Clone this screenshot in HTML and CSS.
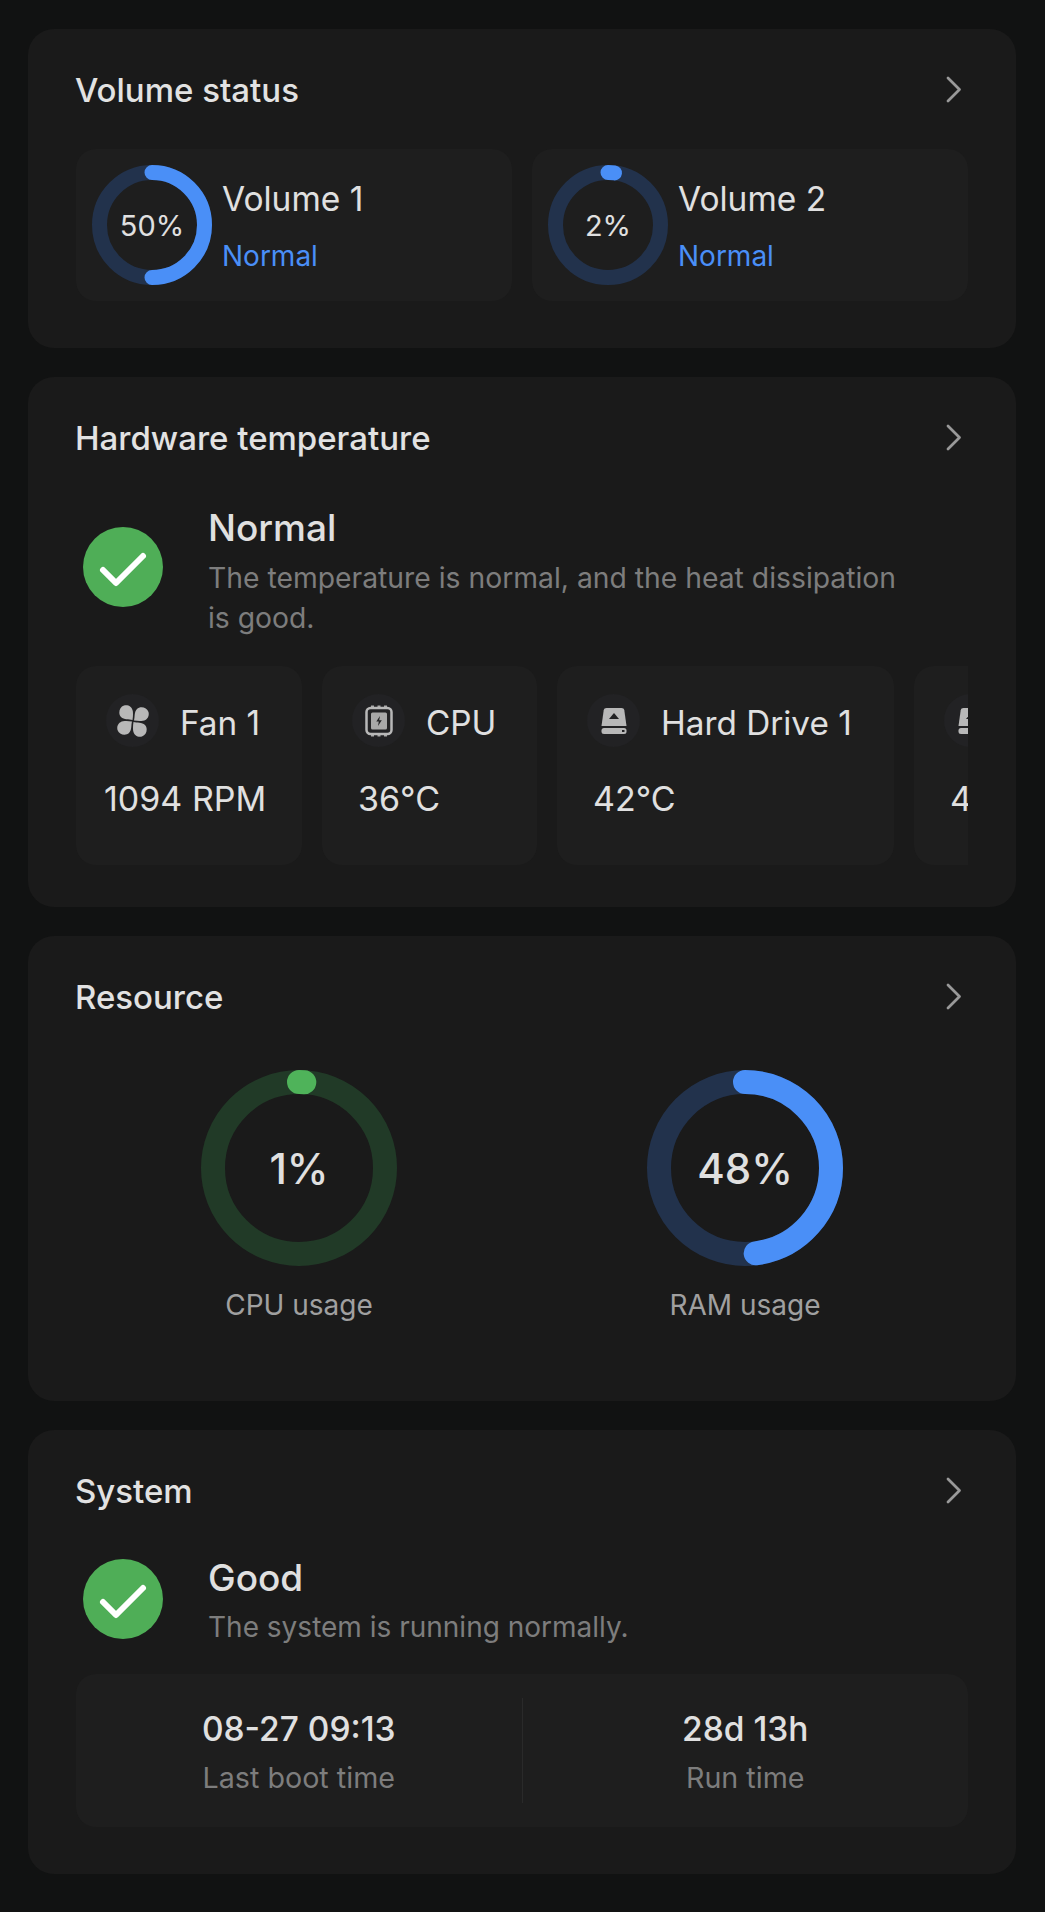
FILE: index.html
```html
<!DOCTYPE html>
<html lang="en">
<head>
<meta charset="utf-8">
<title>Dashboard</title>
<link rel="stylesheet" href="styles.css">
</head>
<body>
<svg class="defs" width="0" height="0" aria-hidden="true">
  <defs>
    <symbol id="chev" viewBox="0 0 16 27"><path d="M2 2 L13.500 13.500 L2 25" fill="none" stroke="currentColor" stroke-width="2.800" stroke-linecap="round" stroke-linejoin="round"/></symbol>
    <symbol id="check" viewBox="0 0 80 80"><circle cx="40" cy="40" r="40" fill="#4fae57"/><path d="M20 43 L33 56 L60 29" fill="none" stroke="#fff" stroke-width="6" stroke-linecap="round" stroke-linejoin="round"/></symbol>
    <symbol id="drive" viewBox="0 0 28 28"><path d="M6.500 1 H21.500 C23 1 24 1.800 24.300 3.300 L26.500 19 H1.500 L3.700 3.300 C4 1.800 5 1 6.500 1Z" fill="#b8b8b8"/><path d="M14 6 L19 12 H9Z" fill="#222224"/><rect x="1.500" y="21" width="25" height="6" rx="2.500" fill="#b8b8b8"/><rect x="22" y="23" width="2.500" height="2" fill="#222224"/></symbol>
  </defs>
</svg>
<main class="page">

  <section class="card card-volume">
    <header class="card-head"><h2 class="card-title">Volume status</h2><svg class="chev"><use href="#chev"/></svg></header>
    <div class="volumes">
      <div class="volume tile">
        <div class="ring ring-small">
          <svg viewBox="0 0 120 120"><circle class="track-blue" cx="60" cy="60" r="52.500"/><circle class="arc-blue" cx="60" cy="60" r="52.500" pathLength="100" stroke-dasharray="50 100" transform="rotate(-90 60 60)"/></svg>
          <span class="ring-value">50%</span>
        </div>
        <div class="volume-text"><div class="volume-name">Volume 1</div><div class="volume-state">Normal</div></div>
      </div>
      <div class="volume tile">
        <div class="ring ring-small">
          <svg viewBox="0 0 120 120"><circle class="track-blue" cx="60" cy="60" r="52.500"/><circle class="arc-blue" cx="60" cy="60" r="52.500" pathLength="100" stroke-dasharray="2 100" transform="rotate(-90 60 60)"/></svg>
          <span class="ring-value">2%</span>
        </div>
        <div class="volume-text"><div class="volume-name">Volume 2</div><div class="volume-state">Normal</div></div>
      </div>
    </div>
  </section>

  <section class="card card-hardware">
    <header class="card-head"><h2 class="card-title">Hardware temperature</h2><svg class="chev"><use href="#chev"/></svg></header>
    <div class="status status-temp">
      <svg class="status-icon"><use href="#check"/></svg>
      <div class="status-text">
        <div class="status-title">Normal</div>
        <p class="status-desc">The temperature is normal, and the heat dissipation is good.</p>
      </div>
    </div>
    <div class="sensors">
      <div class="sensor tile sensor-fan">
        <div class="sensor-head">
          <span class="sensor-icon"><svg class="glyph-fan" viewBox="0 0 32 32"><g fill="#b8b8b8"><path id="blade" d="M15.500 15 C12 14 7 15 4 12 C1 9 2 2 7 0.500 C11 -0.500 15 1.500 15.800 6 C16.200 9 16 12 15.500 15Z"/><use href="#blade" transform="rotate(90 16 16)"/><use href="#blade" transform="rotate(180 16 16)"/><use href="#blade" transform="rotate(270 16 16)"/></g></svg></span>
          <span class="sensor-label">Fan 1</span>
        </div>
        <div class="sensor-value">1094 RPM</div>
      </div>
      <div class="sensor tile sensor-cpu">
        <div class="sensor-head">
          <span class="sensor-icon"><svg class="glyph-chip" viewBox="0 0 28 32"><g fill="#a8a8a8"><rect x="6" y="0.500" width="3" height="2"/><rect x="12.500" y="0.500" width="3" height="2"/><rect x="19" y="0.500" width="3" height="2"/><rect x="6" y="29.500" width="3" height="2"/><rect x="12.500" y="29.500" width="3" height="2"/><rect x="19" y="29.500" width="3" height="2"/></g><rect x="1.500" y="3" width="25" height="26" rx="4" fill="none" stroke="#b8b8b8" stroke-width="2.500"/><rect x="6" y="7.500" width="16" height="17" rx="1.500" fill="#a8a8a8"/><path d="M15 11 L11.300 16.500 H13.800 L13 21 L16.800 15.200 H14.200Z" fill="#222224"/></svg></span>
          <span class="sensor-label">CPU</span>
        </div>
        <div class="sensor-value">36°C</div>
      </div>
      <div class="sensor tile sensor-disk">
        <div class="sensor-head">
          <span class="sensor-icon"><svg class="glyph-drive"><use href="#drive"/></svg></span>
          <span class="sensor-label">Hard Drive 1</span>
        </div>
        <div class="sensor-value">42°C</div>
      </div>
      <div class="sensor tile sensor-disk">
        <div class="sensor-head">
          <span class="sensor-icon"><svg class="glyph-drive"><use href="#drive"/></svg></span>
          <span class="sensor-label">Hard Drive 2</span>
        </div>
        <div class="sensor-value">42°C</div>
      </div>
    </div>
  </section>

  <section class="card card-resource">
    <header class="card-head"><h2 class="card-title">Resource</h2><svg class="chev"><use href="#chev"/></svg></header>
    <div class="gauges">
      <div class="gauge">
        <div class="ring ring-large">
          <svg viewBox="0 0 196 196"><circle class="track-green" cx="98" cy="98" r="86"/><circle class="arc-green" cx="98" cy="98" r="86" pathLength="100" stroke-dasharray="1 100" transform="rotate(-90 98 98)"/></svg>
          <span class="ring-value">1%</span>
        </div>
        <div class="gauge-label">CPU usage</div>
      </div>
      <div class="gauge">
        <div class="ring ring-large">
          <svg viewBox="0 0 196 196"><circle class="track-blue" cx="98" cy="98" r="86"/><circle class="arc-blue" cx="98" cy="98" r="86" pathLength="100" stroke-dasharray="48 100" transform="rotate(-90 98 98)"/></svg>
          <span class="ring-value">48%</span>
        </div>
        <div class="gauge-label">RAM usage</div>
      </div>
    </div>
  </section>

  <section class="card card-system">
    <header class="card-head"><h2 class="card-title">System</h2><svg class="chev"><use href="#chev"/></svg></header>
    <div class="status status-system">
      <svg class="status-icon"><use href="#check"/></svg>
      <div class="status-text">
        <div class="status-title">Good</div>
        <p class="status-desc">The system is running normally.</p>
      </div>
    </div>
    <div class="uptime tile">
      <div class="uptime-cell"><div class="uptime-value">08-27 09:13</div><div class="uptime-label">Last boot time</div></div>
      <div class="uptime-divider"></div>
      <div class="uptime-cell"><div class="uptime-value">28d 13h</div><div class="uptime-label">Run time</div></div>
    </div>
  </section>

</main>
</body>
</html>
```
FILE: styles.css
```css
* { box-sizing: border-box; }
html, body { margin: 0; padding: 0; }
body {
  background: #111212;
  color: #e0e0e0;
  font-family: Inter, "Liberation Sans", sans-serif;
}
.defs { position: absolute; }
.page {
  display: flex;
  flex-direction: column;
  gap: 29px;
  padding: 29px 29px 38px 28px;
  height: 1912px;
  overflow: hidden;
}
.card {
  background: #1a1a1a;
  border-radius: 26px;
  padding: 40px 48px 0;
  flex: none;
}
.card-volume { height: 319px; }
.card-hardware { height: 530px; }
.card-resource { height: 465px; }
.card-system { height: 444px; }
.tile { background: #1e1e1e; border-radius: 20px; }
.card-head {
  display: flex;
  align-items: center;
  justify-content: space-between;
  height: 42px;
}
.card-title { margin: 0 0 0 -1px; font-size: 33px; line-height: 42px; font-weight: 500; color: #e2e2e2; }
.chev { width: 16px; height: 27px; color: #999; margin: -2px 6px 0 0; flex: none; }

.ring { position: relative; flex: none; display: flex; align-items: center; justify-content: center; }
.ring svg { position: absolute; inset: 0; width: 100%; height: 100%; }
.ring circle { fill: none; }
.ring-small { width: 120px; height: 120px; }
.ring-small circle { stroke-width: 15; }
.ring-large { width: 196px; height: 196px; }
.ring-large circle { stroke-width: 24; }
.track-blue { stroke: #22324c; }
.arc-blue { stroke: #4a8ff7; stroke-linecap: round; }
.track-green { stroke: #213a27; }
.arc-green { stroke: #4fb35a; stroke-linecap: round; }
.ring-value { position: relative; color: #e0e0e0; }
.ring-small .ring-value { font-size: 29px; }
.ring-large .ring-value { font-size: 42px; font-weight: 500; }

.volumes { display: flex; gap: 20px; margin-top: 38px; }
.volume { flex: 1; height: 152px; display: flex; align-items: center; padding-left: 16px; gap: 10px; }
.volume-name { font-size: 33.500px; line-height: 42px; color: #e0e0e0; }
.volume-state { font-size: 28px; line-height: 38px; color: #4a8ff7; margin-top: 17px; }
.volume-text { padding-top: 2px; }

.status { display: flex; align-items: center; padding-left: 7px; gap: 45px; }
.status-icon { width: 80px; height: 80px; flex: none; }
.status-title { font-size: 37px; line-height: 44px; font-weight: 500; color: #e0e0e0; }
.status-desc { margin: 8px 0 0; font-size: 28.300px; line-height: 40px; color: #7d7d7d; }
.status-temp { margin-top: 47px; padding-right: 60px; }
.status-temp .status-icon { margin-bottom: 10px; }
.status-system { margin-top: 44px; }
.status-system .status-icon { margin-bottom: 6px; }
.status-system .status-desc { font-size: 28px; margin-top: 7px; }

.sensors { display: flex; gap: 20px; margin-top: 28px; overflow: hidden; }
.sensor { flex: none; height: 199px; padding: 28px 0 0 30px; }
.sensor-fan { width: 226px; }
.sensor-cpu { width: 215px; }
.sensor-disk { width: 337px; }
.sensor-head { display: flex; align-items: center; gap: 21px; height: 53px; }
.sensor-icon { width: 53px; height: 53px; border-radius: 50%; background: #222224; display: flex; align-items: center; justify-content: center; flex: none; }
.glyph-fan { width: 32px; height: 32px; }
.glyph-chip { width: 28px; height: 32px; }
.glyph-drive { width: 28px; height: 28px; }
.sensor-label { font-size: 33.300px; line-height: 40px; color: #e0e0e0; white-space: nowrap; margin-top: 4px; }
.sensor-value { margin: 32px 0 0 6px; font-size: 34px; line-height: 40px; color: #e0e0e0; white-space: nowrap; }
.sensor-fan .sensor-value { margin-left: -2px; }

.gauges { display: grid; grid-template-columns: 1fr 1fr; margin-top: 52px; }
.gauge { display: flex; flex-direction: column; align-items: center; }
.gauge-label { margin-top: 19px; font-size: 28px; line-height: 40px; color: #a0a0a0; }

.uptime { display: flex; align-items: center; height: 153px; margin-top: 27px; }
.uptime-cell { flex: 1; text-align: center; padding-top: 5px; }
.uptime-divider { width: 1px; height: 105px; background: #2a2a2a; flex: none; }
.uptime-value { font-size: 33.500px; line-height: 40px; font-weight: 500; color: #e0e0e0; }
.uptime-label { margin-top: 9px; font-size: 28.700px; line-height: 40px; color: #7d7d7d; }
```
